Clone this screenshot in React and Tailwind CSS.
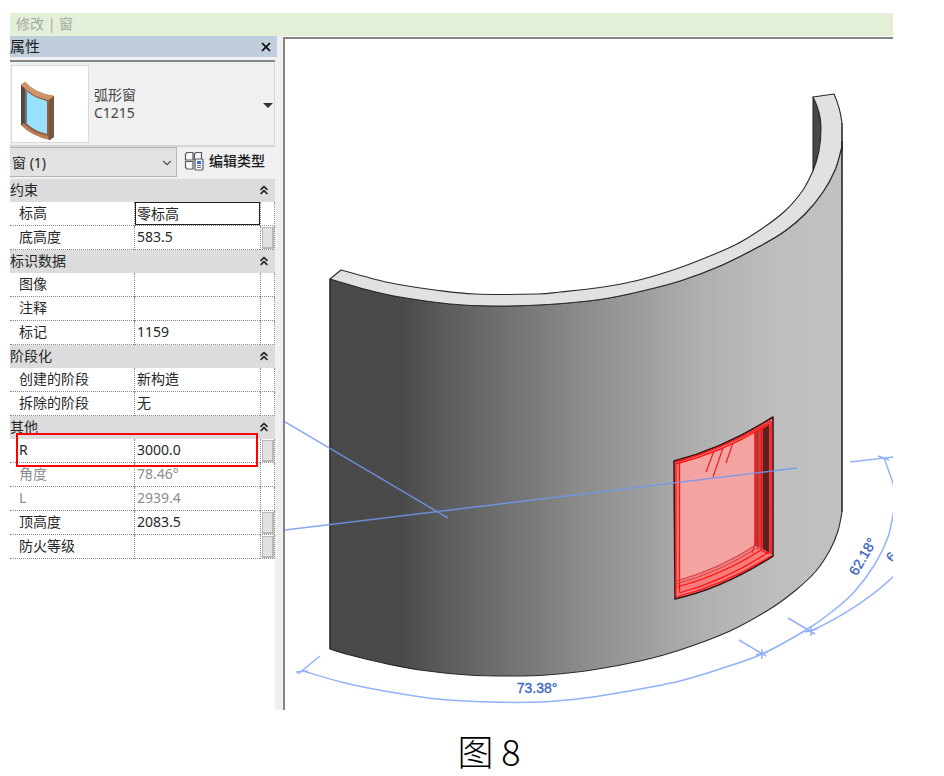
import React, { useState } from 'react';
import { X, ChevronDown, ChevronsUp } from 'lucide-react';

const GROUPS = [
  {
    title: '约束',
    rows: [
      { label: '标高', value: '零标高', active: true },
      { label: '底高度', value: '583.5', button: true },
    ],
  },
  {
    title: '标识数据',
    rows: [
      { label: '图像', value: '' },
      { label: '注释', value: '' },
      { label: '标记', value: '1159' },
    ],
  },
  {
    title: '阶段化',
    rows: [
      { label: '创建的阶段', value: '新构造' },
      { label: '拆除的阶段', value: '无' },
    ],
  },
  {
    title: '其他',
    rows: [
      { label: 'R', value: '3000.0', button: true, marked: true },
      { label: '角度', value: '78.46°', disabled: true },
      { label: 'L', value: '2939.4', disabled: true },
      { label: '顶高度', value: '2083.5', button: true },
      { label: '防火等级', value: '', button: true },
    ],
  },
];

function WindowThumb() {
  return (
    <svg viewBox="0 0 76 76" className="h-full w-full" aria-hidden="true">
      <path d="M9 19 L13 16 Q22 27 42 30 L42 71 L38 74 Q20 70 9 59 Z" fill="#8d6047" />
      <path d="M9 19 L13 21 V58 L9 59 Z" fill="#5b473d" />
      <path d="M9 19 L13 15.500 Q23 27 42 30 L37 34 Q20 31 9 19 Z" fill="#cf9468" />
      <path d="M13 24 Q22 32 35 35 V68 Q22 65 13 56 Z" fill="#99e0fb" />
      <path d="M13 24 V56 L15 58 V26 Z" fill="#54808f" />
      <path d="M11 57 Q22 68 36 70 L36 73 Q20 70 10 60 Z" fill="#bd8159" />
      <path d="M37 34 L42 30 V71 L37 74 Z" fill="#7b553f" />
    </svg>
  );
}

function EditTypeIcon() {
  return (
    <svg viewBox="0 0 20 20" className="h-5 w-5" fill="none" stroke="#55595f" strokeWidth="1.200" aria-hidden="true">
      <path
        d="M3 1.500 H9 V9 H1.500 V3 Z M12 1.500 H17.500 V9 H10.500 V3 Z M1.500 10.500 H9 V18 H3 L1.500 16.500 Z"
        fill="#fafafa"
      />
      <rect x="11" y="8" width="8" height="11" rx="1" fill="#ffffff" />
      <rect x="13" y="10" width="4" height="3" fill="#2f6fdc" stroke="none" />
      <path d="M13 14.500 H17 M13 16.500 H17" stroke="#6b7280" />
    </svg>
  );
}

function PropertyRow({ row }) {
  return (
    <tr>
      <th
        scope="row"
        className={`relative h-6 border-b border-dotted border-[#8a8a8a] p-0 pb-[2px] pl-[9px] text-left font-normal leading-5 ${
          row.disabled ? 'text-[#8c8c8c]' : 'text-[#262626]'
        }`}
      >
        {row.label}
        {row.marked && (
          <span className="pointer-events-none absolute -top-[6px] left-[6px] z-10 h-[34px] w-[242px] border-2 border-[#ff0000]" />
        )}
      </th>
      <td className="h-6 border-b border-l border-dotted border-[#8a8a8a] p-0">
        <input
          aria-label={row.label}
          defaultValue={row.value}
          disabled={row.disabled}
          className={`block h-[23px] w-full bg-white outline-none ${
            row.active ? 'border border-[#222222] pb-px pl-px' : 'pb-[3px] pl-[2px]'
          } ${row.disabled ? 'text-[#8c8c8c]' : 'text-[#262626]'}`}
        />
      </td>
      <td className="h-6 border-x border-b border-dotted border-[#8a8a8a] p-0">
        {row.button && (
          <button
            type="button"
            aria-label={`关联 ${row.label}`}
            className="ml-px block h-[22px] w-3 border border-r-2 border-b-2 border-[#b8b8b8] bg-[#e1e1e1]"
          />
        )}
      </td>
    </tr>
  );
}

function PropertyGroup({ group }) {
  const [open, setOpen] = useState(true);

  return (
    <tbody>
      <tr className="bg-[#dcdcdc]">
        <th colSpan={3} className="h-[23px] p-0 font-normal">
          <button
            type="button"
            onClick={() => setOpen(!open)}
            className="flex h-[23px] w-full items-center justify-between pr-1 pb-[2px] text-[#262626]"
          >
            {group.title}
            <ChevronsUp size={14} strokeWidth={3} className={open ? '' : 'rotate-180'} />
          </button>
        </th>
      </tr>
      {open && group.rows.map((row) => <PropertyRow key={row.label} row={row} />)}
    </tbody>
  );
}

function PropertiesPanel() {
  return (
    <aside className="flex w-[273px] shrink-0 flex-col bg-[#f0f0f0] pr-[6px] text-sm">
      <div className="flex h-[21px] items-center justify-between bg-[#c0cddc] pr-1 text-[15px] text-[#1a1a1a]">
        <h1>属性</h1>
        <button type="button" aria-label="关闭" className="text-black">
          <X size={14} strokeWidth={3} />
        </button>
      </div>

      <div className="mt-[3px] mr-[2px] border-t-2 border-[#858585]">
        <button
          type="button"
          className="flex h-[85px] w-full items-center border-r border-b-2 border-[#d6d6d6] pl-px text-left"
        >
          <span className="block h-[78px] w-[78px] border border-[#d9d9d9] bg-white">
            <WindowThumb />
          </span>
          <span className="flex-1 pl-[5px] leading-[18px] text-[#444444]">
            弧形窗
            <br />
            C1215
          </span>
          <svg viewBox="0 0 10 5" className="mt-[3px] mr-px h-[5px] w-[10px]" aria-hidden="true">
            <path d="M0 0 H10 L5 5 Z" fill="#333333" />
          </svg>
        </button>
      </div>

      <div className="flex h-[32px] items-start">
        <div className="relative w-[167px]">
          <select
            aria-label="类别"
            className="block h-[30px] w-full appearance-none border border-l-0 border-[#b5b5b5] bg-[#e2e2e2] pt-[2px] pl-[2px] text-[#262626]"
          >
            <option>窗 (1)</option>
          </select>
          <ChevronDown
            size={14}
            strokeWidth={2}
            className="pointer-events-none absolute top-[9px] right-[3px] text-[#555555]"
          />
        </div>
        <button type="button" className="flex h-[28px] items-center gap-[5px] pl-[7px] font-medium text-[#1a1a1a]">
          <EditTypeIcon />
          编辑类型
        </button>
      </div>

      <table className="mr-[2px] table-fixed border-separate border-spacing-0 bg-white">
        <colgroup>
          <col className="w-[124px]" />
          <col />
          <col className="w-[15px]" />
        </colgroup>
        {GROUPS.map((group) => (
          <PropertyGroup key={group.title} group={group} />
        ))}
      </table>
      <div className="mr-[2px] flex-1 bg-white" />
    </aside>
  );
}

const TOP_FRONT = [
  [330, 279], [368, 290], [400, 297], [450, 304], [495, 306], [548, 304.5], [600, 299.5], [640, 291.5],
  [680, 281], [720, 266], [760, 246], [785, 231], [805, 214], [823, 192], [835, 170], [841, 150], [842, 144],
];
const TOP_BACK = [
  [813, 171], [803, 190], [785, 211], [760, 230], [735, 245], [700, 260], [670, 271], [635, 281],
  [600, 287.5], [560, 292], [537, 294], [475, 294], [435, 290], [396, 284], [370, 278], [341, 270],
];
const BOTTOM = [
  [842, 512], [838, 531], [830, 550], [816, 571], [796, 590], [770, 609], [730, 631], [680, 650],
  [640, 661], [592, 670], [546, 675], [515, 676], [468, 675], [420, 670], [383, 663], [350, 655], [330, 649],
];
const DIM_ARC = [
  [303, 671], [345, 683], [390, 692], [437, 699], [490, 702], [540, 702], [585, 698], [635, 690],
  [680, 681], [720, 669], [762, 654], [806, 630], [833, 611], [855, 591], [875, 564], [888, 537], [894, 510],
];

// smooth cubic segments through the points, without the leading move command
function curve(points) {
  return points
    .slice(0, -1)
    .map((p, i) => {
      const prev = points[i - 1] || p;
      const next = points[i + 1];
      const after = points[i + 2] || next;
      const c1 = [p[0] + (next[0] - prev[0]) / 6, p[1] + (next[1] - prev[1]) / 6];
      const c2 = [next[0] - (after[0] - p[0]) / 6, next[1] - (after[1] - p[1]) / 6];
      return `C${c1} ${c2} ${next}`;
    })
    .join(' ');
}

function Viewport() {
  return (
    <svg viewBox="285 39 608 671" className="block h-auto w-full bg-white" role="img" aria-label="弧形墙三维视图">
      <defs>
        <linearGradient id="wall" gradientUnits="userSpaceOnUse" x1="330" y1="0" x2="842" y2="0">
          <stop offset="0" stopColor="#494949" />
          <stop offset="0.140" stopColor="#4a4a4a" />
          <stop offset="0.220" stopColor="#5b5b5b" />
          <stop offset="0.380" stopColor="#777777" />
          <stop offset="0.480" stopColor="#8a8a8a" />
          <stop offset="0.620" stopColor="#9f9f9f" />
          <stop offset="0.690" stopColor="#a9abaa" />
          <stop offset="0.780" stopColor="#b5b5b5" />
          <stop offset="0.880" stopColor="#bebebe" />
          <stop offset="1" stopColor="#c1c1c1" />
        </linearGradient>
      </defs>

      {/* wall */}
      <g stroke="#2a2a2a" strokeWidth="1.100" strokeLinejoin="round">
        <path d="M813 97 L818 108 L821 128 L820 148 L813 171 Z" fill="#484848" />
        <path d={`M330 279 ${curve(TOP_FRONT)} V512 ${curve(BOTTOM)} Z`} fill="url(#wall)" />
        <path
          d={`M330 279 ${curve(TOP_FRONT)} V123 Q840 107 834 94 L813 97 Q821 112 821 128 Q821 152 813 171 ${curve(TOP_BACK)} Z`}
          fill="#e1e1e1"
        />
        <path d="M330 279 V649 M842 123 V512" fill="none" />
        <path d="M842 141 V151" strokeWidth="2" />
      </g>

      {/* selected window */}
      <g strokeLinejoin="round">
        <path
          d="M674 461 Q724 448 773 417 V556 Q724 588 675 599 Z"
          fill="#f87c7c"
          stroke="#331111"
          strokeWidth="1.500"
        />
        <path d="M680 463 Q720 452 755 432 V545 Q720 567 680 580 Z" fill="#f4a3a3" />
        <path d="M755 432 L770 423 V553 L755 545 Z" fill="#d84040" />
        <path d="M763 429 L769 425 V553 L763 549 Z" fill="#5c2222" />
        <path d="M757.500 431 V547" stroke="#a03838" strokeWidth="2" />
        <path d="M755 432 V546 M761.500 428 V550 M771 422 V554" stroke="#f51111" strokeWidth="1.500" />
        <path
          d="M676 462 Q724 449 771 421 M676 464 Q724 452 769 424 M676 462 V596 M679.500 463 V592"
          fill="none"
          stroke="#ff1111"
          strokeWidth="1.300"
        />
        <path
          d="M676 597 Q724 585 771 556 M679 593 Q724 581 769 552 M677 587 Q722 575 761 550 L769 554"
          fill="none"
          stroke="#ff1111"
          strokeWidth="1.200"
        />
        <path
          d="M676 581 Q720 569 756 545 M676 584 Q720 572 757 548"
          fill="none"
          stroke="#cf4040"
        />
        <path d="M758 535 L752 553 M758 535 V550" fill="none" stroke="#dd2222" />
        <path d="M714 451 L706 472 M723 448 L713 477 M733 443 L726 463" stroke="#e82020" strokeWidth="1.200" />
      </g>

      {/* reference lines and dimension arcs */}
      <g fill="none" stroke="#7196ee" strokeOpacity="0.850" strokeWidth="1.500">
        <path d="M285 422 L448 518 M285 530 L797 468" />
      </g>
      <g fill="none" stroke="#93b1fb" strokeWidth="1.500">
        <path d={`M303 671 ${curve(DIM_ARC)}`} />
        <path d="M894 487 L892 480 L884 458" />
        <path d="M811 631 Q860 608 894 576" />
        <path d="M320 656 L298 674 M296 672 L308 671" />
        <path d="M739 640 L766 656 M756 655 L768 652 M762 649 V659" />
        <path d="M788 618 L815 634 M805 632 L817 629 M811 626 V636" />
        <path d="M850 462 L893 457 M878 456 L889 460" />
      </g>
      <g
        fill="#3962bd"
        stroke="#3962bd"
        strokeWidth="0.300"
        fontFamily="Liberation Sans, Arial, sans-serif"
        fontSize="14"
        textAnchor="middle"
      >
        <text x="537" y="693">73.38°</text>
        <text transform="translate(867 559) rotate(-60)">62.18°</text>
        <text transform="translate(895 560) rotate(-50)">6</text>
      </g>
    </svg>
  );
}

export default function App() {
  return (
    <main className="min-h-screen bg-white pt-[13px] font-['Noto_Sans','Noto_Sans_CJK_SC',sans-serif]">
      <div className="mr-[51px] ml-[10px]">
        <div className="h-[23px] bg-[#e4efd8] pl-[6px] text-sm leading-[22px] text-[#a3a8a0]">修改 | 窗</div>
        <div className="flex">
          <PropertiesPanel />
          <section className="mt-px min-w-0 flex-1 border-t-2 border-l-2 border-[#858585]">
            <Viewport />
          </section>
        </div>
      </div>
      <p className="pt-[14px] pl-[34px] text-center font-['Noto_Sans_CJK_SC',sans-serif] text-[36px] leading-[52px] font-light text-black">
        图 8
      </p>
    </main>
  );
}
